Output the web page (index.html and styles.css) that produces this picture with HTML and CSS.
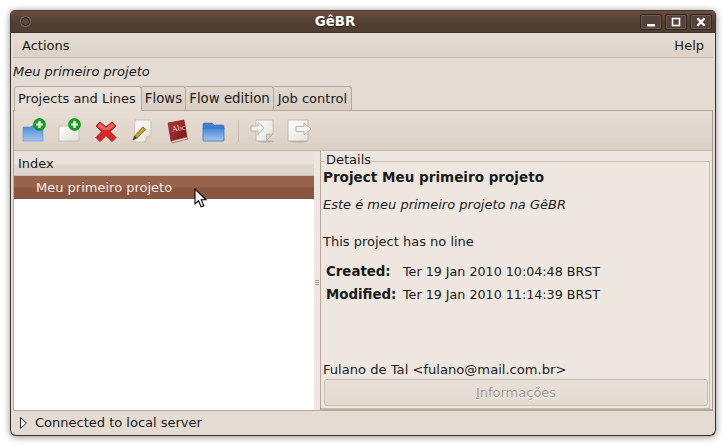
FILE: index.html
```html
<!DOCTYPE html>
<html lang="pt">
<head>
    <meta charset="UTF-8">
    <title>GêBR</title>
    <link rel="stylesheet" href="styles.css">
</head>
<body>
    <svg class="svg-defs" width="0" height="0">
        <defs>
            <linearGradient id="blue" x1="0" y1="0" x2="0" y2="1">
                <stop offset="0" stop-color="#3f86d8"/>
                <stop offset="1" stop-color="#a6c8f0"/>
            </linearGradient>
            <linearGradient id="paper" x1="0" y1="0" x2="1" y2="1">
                <stop offset="0" stop-color="#ffffff"/>
                <stop offset="1" stop-color="#e4e0da"/>
            </linearGradient>
            <linearGradient id="book" x1="0" y1="0" x2="1" y2="1">
                <stop offset="0" stop-color="#b23a3a"/>
                <stop offset="1" stop-color="#7d1515"/>
            </linearGradient>
        </defs>
    </svg>

    <div class="window">
        <div class="titlebar">
            <span class="title-dot"></span>
            <span class="title-text">GêBR</span>
            <div class="title-buttons">
                <span class="title-btn">
                    <svg width="10" height="10" viewBox="0 0 10 10"><rect x="1" y="7" width="8" height="2.5" fill="#fff"/></svg>
                </span>
                <span class="title-btn">
                    <svg width="10" height="10" viewBox="0 0 10 10"><rect x="1.500" y="1.500" width="7" height="7" fill="none" stroke="#fff" stroke-width="1.600"/></svg>
                </span>
                <span class="title-btn">
                    <svg width="10" height="10" viewBox="0 0 10 10"><path d="M1.500 1.200L8.500 8.800M8.500 1.200L1.500 8.800" stroke="#fff" stroke-width="2.400"/></svg>
                </span>
            </div>
        </div>

        <div class="menubar">
            <span>Actions</span>
            <span>Help</span>
        </div>

        <div class="project-label">Meu primeiro projeto</div>

        <div class="tabs">
            <div class="tab tab-active">Projects and Lines</div>
            <div class="tab">Flows</div>
            <div class="tab">Flow edition</div>
            <div class="tab tab-last">Job control</div>
        </div>

        <div class="notebook">
            <div class="toolbar">
                <span class="tool">
                    <svg width="26" height="26" viewBox="0 0 26 26">
                        <path d="M2 9h8l2-2h9a1 1 0 0 1 1 1v15H2z" fill="url(#blue)" stroke="#5b8fd0" stroke-width=".6"/>
                        <circle cx="18.500" cy="6.500" r="6" fill="#12a51a" stroke="#0b7a12" stroke-width=".6"/>
                        <path d="M18.500 3v7M15 6.500h7" stroke="#fff" stroke-width="2.200"/>
                    </svg>
                </span>
                <span class="tool">
                    <svg width="26" height="26" viewBox="0 0 26 26">
                        <path d="M2 8h11l9 4v11H2z" fill="url(#paper)" stroke="#c8c2ba"/>
                        <circle cx="17.500" cy="6.500" r="6" fill="#12a51a" stroke="#0b7a12" stroke-width=".6"/>
                        <path d="M17.500 3v7M14 6.500h7" stroke="#fff" stroke-width="2.200"/>
                    </svg>
                </span>
                <span class="tool">
                    <svg width="26" height="26" viewBox="0 0 26 26">
                        <path d="M3 8l4-4 6 5 6-5 4 4-6 5.500 6 6-4 4-6-6-6 6-4-4 6-6z" fill="#dc2626" stroke="#a31818"/>
                        <path d="M7 5l6 5 6-5 3 3-6 4H10L4 8z" fill="#ee7a7a" opacity=".7"/>
                    </svg>
                </span>
                <span class="tool">
                    <svg width="26" height="26" viewBox="0 0 26 26">
                        <path d="M6 2h16v15l-6 7H5z" fill="url(#paper)" stroke="#c8c2ba"/>
                        <path d="M22 17l-6 7 1-6z" fill="#cfc9c0"/>
                        <path d="M4 22l1.500-4L14 9l2.500 2.500L8 20z" fill="#c9a226" stroke="#5f4c0e" stroke-width=".7"/>
                        <path d="M4 22l1.500-4 2.500 2z" fill="#3a3a2a"/>
                    </svg>
                </span>
                <span class="tool">
                    <svg width="26" height="26" viewBox="0 0 26 26">
                        <path d="M3 5l16-3 3 17-16 4z" fill="url(#book)" stroke="#6b1212" stroke-width=".6"/>
                        <path d="M6 23l16-4 1 2-16 4z" fill="#e6d8d0" stroke="#8a2a2a" stroke-width=".5"/>
                        <text x="7" y="13" class="book-text" transform="rotate(-10 12 12)">Abc</text>
                    </svg>
                </span>
                <span class="tool">
                    <svg width="26" height="26" viewBox="0 0 26 26">
                        <path d="M2 6a1 1 0 0 1 1-1h8l2 2h9a1 1 0 0 1 1 1v3H2z" fill="#3f7fcf" stroke="#3a70b8" stroke-width=".6"/>
                        <path d="M2 10h21v12a1 1 0 0 1-1 1H3a1 1 0 0 1-1-1z" fill="url(#blue)" stroke="#3a70b8" stroke-width=".8"/>
                    </svg>
                </span>
                <span class="tool-sep"></span>
                <span class="tool">
                    <svg width="26" height="26" viewBox="0 0 26 26">
                        <ellipse cx="16" cy="23.500" rx="8" ry="1.200" fill="#b8aea2"/>
                        <path d="M6 2h17v14l-7 7H6z" fill="url(#paper)" stroke="#c0bab2"/>
                        <path d="M23 16l-7 7c1-3 0-6 0-7z" fill="#cfc9c0" stroke="#b0aaa2" stroke-width=".5"/>
                        <path d="M14 10l-6-5.500V8H1v5h7v3.500z" fill="#f6f4f0" stroke="#aaa49c" stroke-width=".8"/>
                    </svg>
                </span>
                <span class="tool">
                    <svg width="26" height="26" viewBox="0 0 26 26">
                        <ellipse cx="13" cy="23.500" rx="9" ry="1.200" fill="#b8aea2"/>
                        <path d="M2 2h20v6l-2 3 2 3v9H2z" fill="url(#paper)" stroke="#c0bab2"/>
                        <path d="M25 11l-7-6v3.500h-8v5h8V17z" fill="#f6f4f0" stroke="#aaa49c" stroke-width=".8"/>
                    </svg>
                </span>
            </div>

            <div class="panes">
                <div class="index-pane">
                    <div class="index-head">Index</div>
                    <div class="index-row">Meu primeiro projeto</div>
                </div>
                <div class="pane-grip"><span></span><span></span><span></span></div>
                <div class="details-pane">
                    <span class="details-legend">Details</span>
                    <div class="details-body">
                        <div class="details-title">Project Meu primeiro projeto</div>
                        <div class="details-desc">Este é meu primeiro projeto na GêBR</div>
                        <div class="details-lines">This project has no line</div>
                        <div class="details-dates">
                            <strong>Created:</strong><span>Ter 19 Jan 2010 10:04:48 BRST</span>
                            <strong>Modified:</strong><span>Ter 19 Jan 2010 11:14:39 BRST</span>
                        </div>
                        <div class="details-author">Fulano de Tal &lt;fulano@mail.com.br&gt;</div>
                        <div class="details-btn"><span class="mnemonic">I</span>nformações</div>
                    </div>
                </div>
            </div>
        </div>

        <div class="statusbar">
            <svg width="9" height="14" viewBox="0 0 9 14"><path d="M1.500 1.500l6 5.500-6 5.500z" fill="#fff" stroke="#222" stroke-width="1"/></svg>
            <span>Connected to local server</span>
        </div>
    </div>

    <svg class="cursor" width="14" height="21" viewBox="0 0 14 21">
        <path d="M1 1v15l3.500-3.200 2.600 6 2.700-1.200-2.600-5.800H12z" fill="#fff" stroke="#000" stroke-width="1.100"/>
    </svg>
</body>
</html>
```

FILE: styles.css
```css
* {
    margin: 0;
    padding: 0;
    box-sizing: border-box;
}

body {
    width: 725px;
    height: 446px;
    padding: 10px 9px 10px 10px;
    background: #fff;
    font-family: "DejaVu Sans", sans-serif;
    font-size: 13px;
    color: #1a1a1a;
    overflow: hidden;
    position: relative;
}

.svg-defs {
    position: absolute;
}

.window {
    height: 426px;
    display: flex;
    flex-direction: column;
    background: #e4dbd2;
    border: 1px solid #3c3229;
    border-top-color: #4a3a2e;
    border-radius: 5px 5px 6px 6px;
    box-shadow: 0 1px 7px rgba(0,0,0,0.45);
    overflow: hidden;
}

.titlebar {
    height: 22px;
    flex: none;
    display: flex;
    align-items: center;
    background: linear-gradient(#6a4c3e, #54403500 60%), #503e33;
    border-bottom: 1px solid #3a2e26;
    padding-left: 10px;
}

.title-dot {
    width: 9px;
    height: 9px;
    flex: none;
    border-radius: 50%;
    border: 1px solid #2e241d;
    background: #5c4a3e;
    box-shadow: 0 0 0 1px #7a6a5e;
}

.title-text {
    flex: 1;
    text-align: center;
    color: #fff;
    font-weight: bold;
    font-size: 13.33px;
    text-shadow: 0 1px 1px #222;
}

.title-buttons {
    margin-right: 3px;
    display: flex;
    gap: 3px;
}

.title-btn {
    width: 22px;
    height: 16px;
    display: flex;
    align-items: center;
    justify-content: center;
    border: 1px solid #2f2620;
    border-radius: 2px;
    box-shadow: inset 0 0 0 1px #6f5c50;
    background: #54423a;
}

.menubar {
    height: 25px;
    flex: none;
    display: flex;
    justify-content: space-between;
    align-items: center;
    padding: 0 9px;
    background: linear-gradient(#e5dcd3, #dcd2c8);
    border-bottom: 1px solid #c8bcb0;
    margin: 0 2px;
}

.project-label {
    height: 27px;
    flex: none;
    display: flex;
    align-items: center;
    padding-left: 2px;
    font-style: italic;
}

.tabs {
    height: 25px;
    flex: none;
    display: flex;
    align-items: flex-end;
    padding-left: 3px;
}

.tab {
    height: 24px;
    padding: 0 3px;
    display: flex;
    align-items: center;
    font-size: 13.33px;
    background: linear-gradient(#e1d8cf, #d8cec4);
    border: 1px solid #b5a898;
    border-bottom: none;
    border-left: none;
    border-radius: 0 3px 0 0;
}

.tab-active {
    height: 25px;
    padding: 0 5px 2px 3px;
    font-size: 13px;
    background: linear-gradient(#e9e2da, #e6ded5);
    border-left: 1px solid #b5a898;
    border-radius: 3px 3px 0 0;
    margin-bottom: -1px;
    position: relative;
}

.tab-last {
    font-size: 13px;
    padding: 0 4px;
}

.notebook {
    height: 301px;
    flex: none;
    margin: 0 2px;
    display: flex;
    flex-direction: column;
    border: 1px solid #b5a898;
    border-right-color: #a89a8a;
    border-bottom: none;
}

.toolbar {
    height: 40px;
    flex: none;
    display: flex;
    align-items: center;
    gap: 10px;
    padding: 0 0 0 7px;
    background: linear-gradient(#e6ddd4, #dbd0c6);
    border-bottom: 1px solid #c4b8ac;
}

.tool {
    width: 26px;
    height: 26px;
    flex: none;
}

.tool svg {
    display: block;
}

.book-text {
    font-family: "Liberation Serif", serif;
    font-size: 8px;
    fill: #f0d8d8;
}

.tool-sep {
    width: 1px;
    height: 22px;
    background: #c6bbb0;
    margin: 0 1px;
    flex: none;
}

.panes {
    flex: 1;
    display: flex;
    min-height: 0;
}

.index-pane {
    width: 300px;
    flex: none;
    background: #fff;
    margin-top: 1px;
    border-bottom: 1px solid #b5a898;
}

.index-head {
    height: 24px;
    padding-left: 4px;
    display: flex;
    align-items: center;
    background: linear-gradient(#e9e2da 0%, #e9e2da 50%, #e0d7ce 55%, #ddd3c9 100%);
    border-bottom: 1px solid #cfc4b9;
}

.index-row {
    height: 23px;
    padding-left: 22px;
    display: flex;
    align-items: center;
    color: #f4ece6;
    background: linear-gradient(#98634b 0%, #98634b 45%, #8a5640 55%, #885540 100%);
}

.pane-grip {
    width: 6px;
    flex: none;
    display: flex;
    flex-direction: column;
    align-items: center;
    justify-content: center;
    gap: 1px;
    background: #ede7e0;
    margin-top: 1px;
    padding-top: 2px;
    border-bottom: 1px solid #b5a898;
}

.pane-grip span {
    width: 4px;
    height: 1px;
    background: #b0a496;
}

.details-pane {
    flex: 1;
    min-width: 0;
    display: flex;
    flex-direction: column;
    position: relative;
    padding-top: 10px;
    background: #ede7e0;
    border-left: 1px solid #b5a898;
    border-bottom: 2px solid #b5a898;
}

.details-legend {
    position: absolute;
    top: 1px;
    left: 4px;
    background: #ede7e0;
    padding: 0 1px;
    line-height: 16px;
}

.details-body {
    flex: 1;
    min-height: 0;
    margin-right: 2px;
    border: 1px solid #c9bdb0;
    border-left: none;
    padding: 7px 1px 0 2px;
    display: flex;
    flex-direction: column;
}

.details-title {
    font-weight: bold;
    font-size: 13.55px;
    line-height: 16px;
}

.details-desc {
    font-style: italic;
    line-height: 16px;
    margin-top: 12px;
}

.details-lines {
    line-height: 16px;
    margin-top: 21px;
}

.details-dates {
    display: grid;
    grid-template-columns: 77px auto;
    justify-content: start;
    row-gap: 7px;
    padding-left: 3px;
    margin-top: 14px;
    line-height: 16px;
}

.details-dates strong {
    font-size: 13.33px;
}

.details-dates span {
    font-size: 12.7px;
}

.details-author {
    margin-top: auto;
    font-size: 13.1px;
    line-height: 16px;
}

.details-btn {
    height: 27px;
    margin: 1px 0 2px 1px;
    display: flex;
    align-items: center;
    justify-content: center;
    color: #a09488;
    text-shadow: 0 1px 0 #fff;
    background: linear-gradient(#e8e0d8, #e4dbd2);
    border: 1px solid #c9bdb0;
    border-radius: 3px;
}

.mnemonic {
    text-decoration: underline;
}

.statusbar {
    flex: 1;
    display: flex;
    align-items: center;
    gap: 7px;
    padding: 0 0 1px 8px;
}

.statusbar svg {
    flex: none;
}

.cursor {
    position: absolute;
    left: 194px;
    top: 188px;
}
```
